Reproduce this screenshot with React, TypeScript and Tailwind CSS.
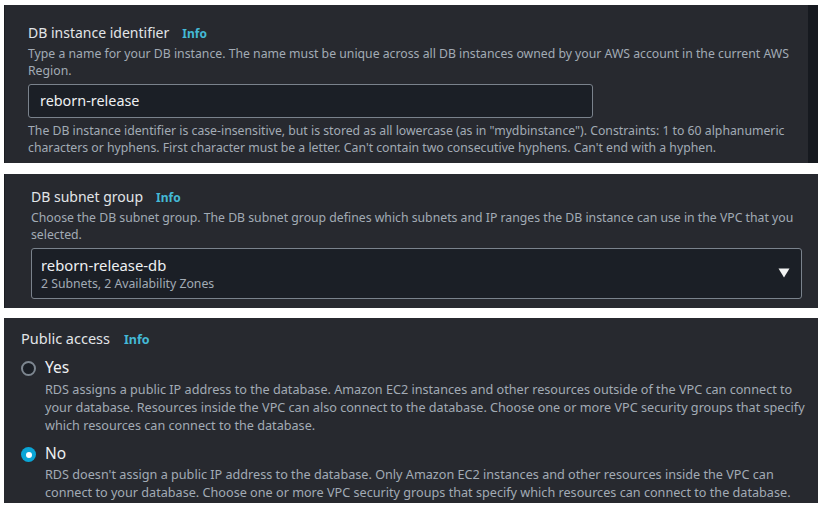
const font = { fontFamily: '"Noto Sans", "Open Sans", sans-serif' }

function Info({ big }: { big?: boolean }) {
  return (
    <span className={big ? "ml-[14px] text-[12.5px] font-bold text-[#44b9d6]" : "ml-[13px] text-[12px] font-bold text-[#44b9d6]"}>
      Info
    </span>
  )
}

export default function App() {
  return (
    <div className="flex w-[823px] h-[507px] flex-col bg-white pt-[5px]" style={font}>
      {/* DB instance identifier */}
      <div className="ml-[4px] flex h-[158px] w-[814px] bg-[#27292f]">
        <div className="flex-1 border-l border-[#1b1d22] pl-[23px] pr-[12px] pt-[18px]">
          <div className="flex items-baseline text-[14px] leading-[20px] text-[#e2e5e8]">
            DB instance identifier
            <Info />
          </div>
          <p className="mt-[1px] text-[12.25px] leading-[17px] text-[#a2abb5]">
            Type a name for your DB instance. The name must be unique across all DB instances owned by your AWS account in the current AWS Region.
          </p>
          <div className="mt-[5px] flex h-[34px] w-[565px] items-center rounded-[3px] border border-[#7a828c] bg-[#1b1f26] pl-[11px] text-[14.4px] text-[#eef0f2]">
            reborn-release
          </div>
          <p className="mt-[4px] text-[12.25px] leading-[17px] text-[#a2abb5]">
            The DB instance identifier is case-insensitive, but is stored as all lowercase (as in "mydbinstance"). Constraints: 1 to 60 alphanumeric characters or hyphens. First character must be a letter. Can't contain two consecutive hyphens. Can't end with a hyphen.
          </p>
        </div>
        <div className="w-[10px] bg-[#16191f]" />
      </div>

      {/* DB subnet group */}
      <div className="ml-[4px] mt-[11px] h-[134px] w-[814px] border-l border-[#1b1d22] bg-[#27292f] pl-[26px] pr-[16px] pt-[13px]">
        <div className="flex items-baseline text-[14px] leading-[20px] text-[#e2e5e8]">
          DB subnet group
          <Info />
        </div>
        <p className="mt-[1px] text-[12.25px] leading-[17px] text-[#a2abb5]">
          Choose the DB subnet group. The DB subnet group defines which subnets and IP ranges the DB instance can use in the VPC that you selected.
        </p>
        <div className="mt-[5px] flex h-[51px] w-[771px] items-center justify-between rounded-[3px] border border-[#7a828c] bg-[#1b1f26] pl-[9px] pr-[11px]">
          <div>
            <div className="text-[14.8px] leading-[20px] text-[#eef0f2]">reborn-release-db</div>
            <div className="text-[12.25px] leading-[17px] text-[#a2abb5]">2 Subnets, 2 Availability Zones</div>
          </div>
          <svg width="12" height="10" viewBox="0 0 12 10" className="mb-[2px]">
            <path d="M0.5 0.5h11L6 9.5z" fill="#f2f3f3" />
          </svg>
        </div>
      </div>

      {/* Public access */}
      <div className="ml-[4px] mt-[10px] h-[185px] w-[814px] bg-[#27292f] pl-[17px] pr-[12px] pt-[10px]">
        <div className="flex items-baseline text-[14.5px] leading-[21px] text-[#e2e5e8]">
          Public access
          <Info big />
        </div>
        <div className="mt-[7px] flex gap-[9px]">
          <span className="mt-[4px] h-[15px] w-[15px] shrink-0 rounded-full border-2 border-[#7d8690] bg-[#1b1f26]" />
          <div>
            <div className="text-[15.5px] leading-[21px] text-[#eef0f2]">Yes</div>
            <p className="mt-[2px] text-[12.65px] leading-[18px] text-[#a2abb5]">
              RDS assigns a public IP address to the database. Amazon EC2 instances and other resources outside of the VPC can connect to your database. Resources inside the VPC can also connect to the database. Choose one or more VPC security groups that specify which resources can connect to the database.
            </p>
          </div>
        </div>
        <div className="mt-[9px] flex gap-[9px]">
          <span className="mt-[4px] flex h-[15px] w-[15px] shrink-0 items-center justify-center rounded-full bg-[#0aa5d6]">
            <span className="h-[6px] w-[6px] rounded-full bg-white" />
          </span>
          <div>
            <div className="text-[15.5px] leading-[21px] text-[#eef0f2]">No</div>
            <p className="mt-[1px] text-[12.65px] leading-[18px] text-[#a2abb5]">
              RDS doesn't assign a public IP address to the database. Only Amazon EC2 instances and other resources inside the VPC can connect to your database. Choose one or more VPC security groups that specify which resources can connect to the database.
            </p>
          </div>
        </div>
      </div>
    </div>
  )
}
